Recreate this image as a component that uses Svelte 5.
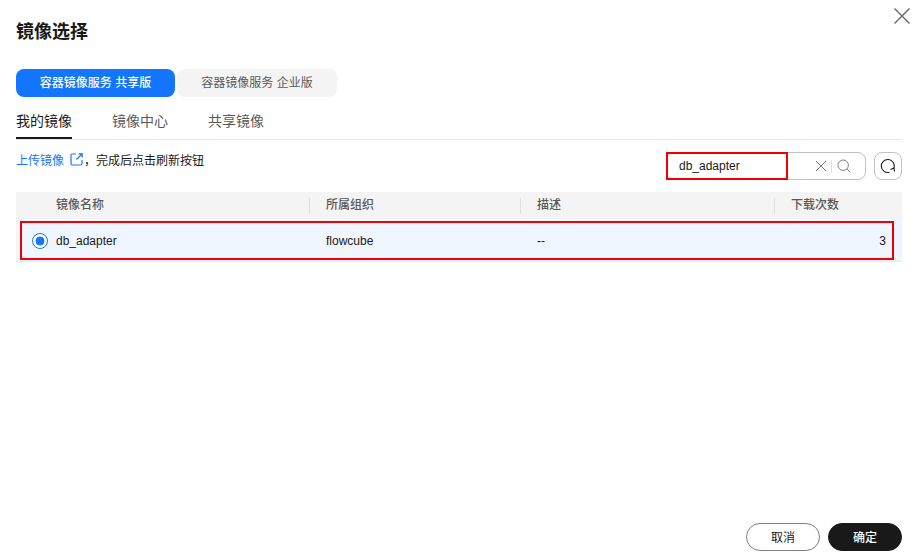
<script>
  const columns = ['镜像名称', '所属组织', '描述', '下载次数'];
</script>

<div class="dialog">
  <button class="close" aria-label="关闭">
    <svg width="18" height="18" viewBox="0 0 18 18"><path d="M1.500 1.500 16.500 16.500M16.500 1.500 1.500 16.500" /></svg>
  </button>
  <h1>镜像选择</h1>

  <div class="seg">
    <div class="seg-item on">容器镜像服务 共享版</div>
    <div class="seg-item">容器镜像服务 企业版</div>
  </div>

  <div class="tabs">
    <div class="tab active">我的镜像</div>
    <div class="tab">镜像中心</div>
    <div class="tab">共享镜像</div>
  </div>

  <div class="toolbar">
    <div class="hint">
      <span class="link">上传镜像</span>
      <svg class="ext" width="13" height="13" viewBox="0 0 13 13"><path d="M6 1H2.500A1.500 1.500 0 0 0 1 2.500V10.500A1.500 1.500 0 0 0 2.500 12H10.500A1.500 1.500 0 0 0 12 10.500V7M6.500 6.500 12 1M8.500 .8H12.200V4.500" /></svg>
      <span>，完成后点击刷新按钮</span>
    </div>
    <div class="tools">
      <div class="search">
        <span class="value">db_adapter</span>
        <svg class="x" width="12" height="12" viewBox="0 0 12 12"><path d="M1 1 11 11M11 1 1 11" /></svg>
        <i class="sep"></i>
        <svg class="mag" width="14" height="14" viewBox="0 0 14 14"><circle cx="6.200" cy="6.200" r="5.200" /><path d="M10 10 13.300 13.300" /></svg>
        <span class="mark"></span>
      </div>
      <button class="refresh" aria-label="刷新">
        <svg width="16" height="16" viewBox="0 0 16 16"><path d="M14 10A6.500 6.500 0 1 0 9.500 14.300" /><path d="M10.500 11.500 14 10 14.500 13.500" /></svg>
      </button>
    </div>
  </div>

  <div class="table">
    <div class="row head">
      {#each columns as c}
        <div class="cell">{c}</div>
      {/each}
    </div>
    <div class="row body">
      <div class="cell"><span class="radio"></span>db_adapter</div>
      <div class="cell">flowcube</div>
      <div class="cell">--</div>
      <div class="cell num">3</div>
      <span class="rowmark"></span>
    </div>
  </div>

  <div class="footer">
    <button class="btn">取消</button>
    <button class="btn primary">确定</button>
  </div>
</div>

<style>
  :global(body) {
    margin: 0;
    background: #fff;
  }
  .dialog {
    position: relative;
    box-sizing: border-box;
    width: 924px;
    height: 559px;
    padding: 22px 22px 8px 16px;
    display: flex;
    flex-direction: column;
    overflow: hidden;
    font-family: "Liberation Sans", "Noto Sans CJK SC", sans-serif;
    font-size: 12px;
    color: #191919;
  }
  .close {
    position: absolute;
    top: 7px;
    right: 13px;
    border: 0;
    background: none;
    padding: 0;
    width: 18px;
    height: 18px;
  }
  .close path {
    stroke: #666;
    stroke-width: 1.4;
    fill: none;
  }
  h1 {
    margin: 0;
    font-size: 18px;
    line-height: 20px;
    font-weight: 700;
    color: #191919;
  }
  .seg {
    display: flex;
    gap: 2px;
    margin-top: 27px;
  }
  .seg-item {
    width: 159px;
    height: 28px;
    line-height: 28px;
    text-align: center;
    border-radius: 8px;
    background: #f4f4f4;
    color: #595959;
  }
  .seg-item + .seg-item {
    width: 160px;
  }
  .seg-item.on {
    background: #1476ff;
    color: #fff;
    font-weight: 500;
  }
  .tabs {
    display: flex;
    gap: 40px;
    margin-top: 9px;
    height: 33px;
    border-bottom: 1px solid #e9e9e9;
    font-size: 14px;
  }
  .tab {
    line-height: 30px;
    height: 33px;
    box-sizing: border-box;
    color: #595959;
    font-size: 14px;
  }
  .tab.active {
    color: #191919;
    border-bottom: 2px solid #191919;
  }
  .toolbar {
    display: flex;
    justify-content: space-between;
    align-items: flex-start;
    margin-top: 12px;
  }
  .hint {
    display: flex;
    align-items: center;
    height: 18px;
    margin-top: -2px;
    color: #191919;
  }
  .link {
    color: #1476ff;
  }
  .ext {
    margin-left: 6px;
    margin-right: 1px;
  }
  .ext path {
    stroke: #1476ff;
    fill: none;
    stroke-width: 1.2;
  }
  .tools {
    display: flex;
    gap: 8px;
  }
  .search {
    position: relative;
    box-sizing: border-box;
    width: 200px;
    height: 28px;
    border: 1px solid #c2c2c2;
    border-radius: 8px;
    display: flex;
    align-items: center;
    padding-left: 12px;
    padding-right: 14px;
  }
  .value {
    flex: 1;
  }
  .x {
    margin-right: -1px;
  }
  .x path {
    stroke: #808080;
    fill: none;
  }
  .sep {
    width: 1px;
    height: 12px;
    background: #dfdfdf;
    margin: 0 5px;
  }
  .mag {
    stroke: #808080;
    fill: none;
  }
  .mark {
    position: absolute;
    left: -1px;
    top: -1px;
    width: 118px;
    height: 24px;
    border: 2px solid #f00000;
  }
  .refresh {
    box-sizing: border-box;
    width: 28px;
    height: 28px;
    border: 1px solid #c2c2c2;
    border-radius: 8px;
    background: #fff;
    padding: 0;
    display: flex;
    align-items: center;
    justify-content: center;
  }
  .refresh path {
    stroke: #191919;
    fill: none;
    stroke-width: 1.1;
  }
  .table {
    margin-top: 12px;
  }
  .row {
    position: relative;
    display: grid;
    grid-template-columns: 293px 211px 254px 128px;
    align-items: center;
  }
  .head {
    height: 28px;
    background: #f4f4f4;
    color: #595959;
    align-items: start;
  }
  .head .cell {
    position: relative;
    font-weight: 500;
    padding-left: 16px;
    padding-top: 5px;
    line-height: 16px;
  }
  .head .cell:first-child {
    padding-left: 40px;
  }
  .head .cell + .cell {
    padding-left: 17px;
  }
  .head .cell + .cell::before {
    content: "";
    position: absolute;
    left: 0;
    top: 6px;
    width: 1px;
    height: 16px;
    background: #dfdfdf;
  }
  .body {
    box-sizing: border-box;
    height: 42px;
    background: #f0f6ff;
    border-bottom: 1px solid #e9e9e9;
  }
  .body .cell {
    padding-left: 16px;
    display: flex;
    align-items: center;
  }
  .body .cell + .cell {
    padding-left: 17px;
  }
  .body .num {
    justify-content: flex-end;
    padding-right: 16px;
  }
  .radio {
    box-sizing: border-box;
    width: 16px;
    height: 16px;
    border: 1px solid #1476ff;
    border-radius: 50%;
    margin-right: 8px;
    background: radial-gradient(circle, #1476ff 0 4.200px, #fff 4.700px);
  }
  .rowmark {
    position: absolute;
    left: 4px;
    right: 8px;
    top: 1px;
    bottom: 1px;
    border: 2px solid #f00000;
  }
  .footer {
    margin-top: auto;
    display: flex;
    justify-content: flex-end;
    gap: 8px;
  }
  .btn {
    width: 74px;
    height: 28px;
    border-radius: 14px;
    border: 1px solid #808080;
    background: #fff;
    color: #191919;
    font: inherit;
    padding: 0 0 2px;
  }
  .btn.primary {
    background: #191919;
    border-color: #191919;
    color: #fff;
    font-weight: 500;
  }
</style>
